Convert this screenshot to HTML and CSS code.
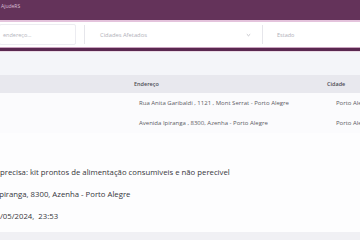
FILE: index.html
```html
<!DOCTYPE html>
<html lang="pt-BR">
  <head>
    <meta charset="UTF-8" />
    <meta name="viewport" content="width=device-width, initial-scale=1.0" />
    <title>AjudeRS</title>
    <link rel="stylesheet" href="styles.css">
  </head>
  <body>
    <div class="page">
      <!-- Top bar -->
      <header class="topbar">
        <span class="brand">AjudeRS</span>
      </header>

      <!-- Filters -->
      <div class="filters">
        <div class="search">endereço...</div>
        <span class="divider"></span>
        <div class="select">
          <span>Cidades Afetados</span>
          <svg class="chevron" width="5" height="4" viewBox="0 0 5 4">
            <path d="M0.8 1.2 L2.5 2.8 L4.2 1.2" fill="none" stroke="#b5b5bd" stroke-width="0.8" />
          </svg>
        </div>
        <span class="divider"></span>
        <div class="state">Estado</div>
      </div>
      <div class="accent"></div>

      <!-- Table -->
      <div class="content">
        <table class="places">
          <thead>
            <tr>
              <th class="col-name"></th>
              <th class="col-address">Endereço</th>
              <th class="col-city">Cidade</th>
            </tr>
          </thead>
          <tbody>
            <tr>
              <td></td>
              <td class="address">Rua Anita Garibaldi , 1121 , Mont Serrat - Porto Alegre</td>
              <td class="city">Porto Alegre</td>
            </tr>
            <tr>
              <td></td>
              <td class="address">Avenida Ipiranga , 8300, Azenha - Porto Alegre</td>
              <td class="city">Porto Alegre</td>
            </tr>
          </tbody>
        </table>

        <!-- Expanded row details -->
        <div class="detail">
          <p>precisa: kit prontos de alimentação consumiveis e não perecivel</p>
          <p class="shift">Ipiranga, 8300, Azenha - Porto Alegre</p>
          <p>/05/2024,&nbsp; 23:53</p>
        </div>

        <table class="places peek">
          <tbody>
            <tr>
              <td class="col-name"></td>
              <td class="address">Avenida Ipiranga , 8300, Azenha - Porto Alegre</td>
              <td class="city">Porto Alegre</td>
            </tr>
          </tbody>
        </table>
      </div>
    </div>
  </body>
</html>
```

FILE: styles.css
```css
body {
  margin: 0;
  font-family: "Open Sans", "DejaVu Sans", sans-serif;
  background-color: #f4f5f9;
}

.page {
  width: 360px;
  height: 240px;
  overflow: hidden;
}

/* Top bar */
.topbar {
  background-color: #64335a;
  border-bottom: 2px solid #e4c3dc;
  box-sizing: border-box;
  height: 22px;
  padding: 2px 0 0 1px;
}

.brand {
  font-size: 5px;
  color: #d9bfd3;
  line-height: 8px;
  display: block;
}

/* Filters */
.filters {
  height: 25px;
  background-color: #ffffff;
  display: flex;
  align-items: center;
}

.search {
  width: 77px;
  height: 21px;
  box-sizing: border-box;
  margin-left: -1px;
  border: 1px solid #ececf1;
  border-radius: 2px;
  font-size: 5.5px;
  color: #b4b4bc;
  display: flex;
  align-items: center;
  padding-left: 3px;
}

.divider {
  width: 1px;
  height: 19px;
  background-color: #e6e6eb;
  margin: 0 14px 0 8px;
}

.select {
  width: 155px;
  box-sizing: border-box;
  display: flex;
  align-items: center;
  justify-content: space-between;
  font-size: 5.8px;
  color: #b0b0b8;
  padding-left: 1px;
  padding-right: 3px;
}

.chevron {
  display: block;
}

.state {
  font-size: 5.5px;
  color: #b0b0b8;
}

.accent {
  height: 3px;
  background-color: #5a2850;
  border-top: 1px solid #c9a3bf;
  border-bottom: 1px solid #eadbe6;
}

/* Table */
.content {
  padding-top: 23px;
}

.places {
  width: 100%;
  border-collapse: collapse;
  table-layout: fixed;
}

.places th {
  height: 18px;
  padding: 0;
  background-color: #e8e8ee;
  font-size: 5.5px;
  font-weight: 600;
  color: #4a4a52;
  text-align: left;
  white-space: nowrap;
}

.col-name {
  width: 120px;
}

.places th.col-address {
  width: 179px;
  padding-left: 14px;
}

.places th.col-city {
  padding-left: 14px;
}

.places td {
  height: 20px;
  padding: 0;
  background-color: #fbfbfd;
  font-size: 6px;
  color: #5c5c64;
  white-space: nowrap;
  overflow: hidden;
}

.places td.address {
  padding-left: 19px;
}

.places td.city {
  padding-left: 23px;
}

.peek td.address {
  width: 174px;
}

/* Details */
.detail {
  background-color: #fdfdfe;
  padding: 28px 0 5px;
}

.detail p {
  margin: 0;
  line-height: 22px;
  font-size: 7.75px;
  color: #36363c;
  white-space: nowrap;
}

.detail .shift {
  margin-left: -3px;
}

.peek td {
  background-color: #f0f0f4;
  color: #8a8a92;
}
```
